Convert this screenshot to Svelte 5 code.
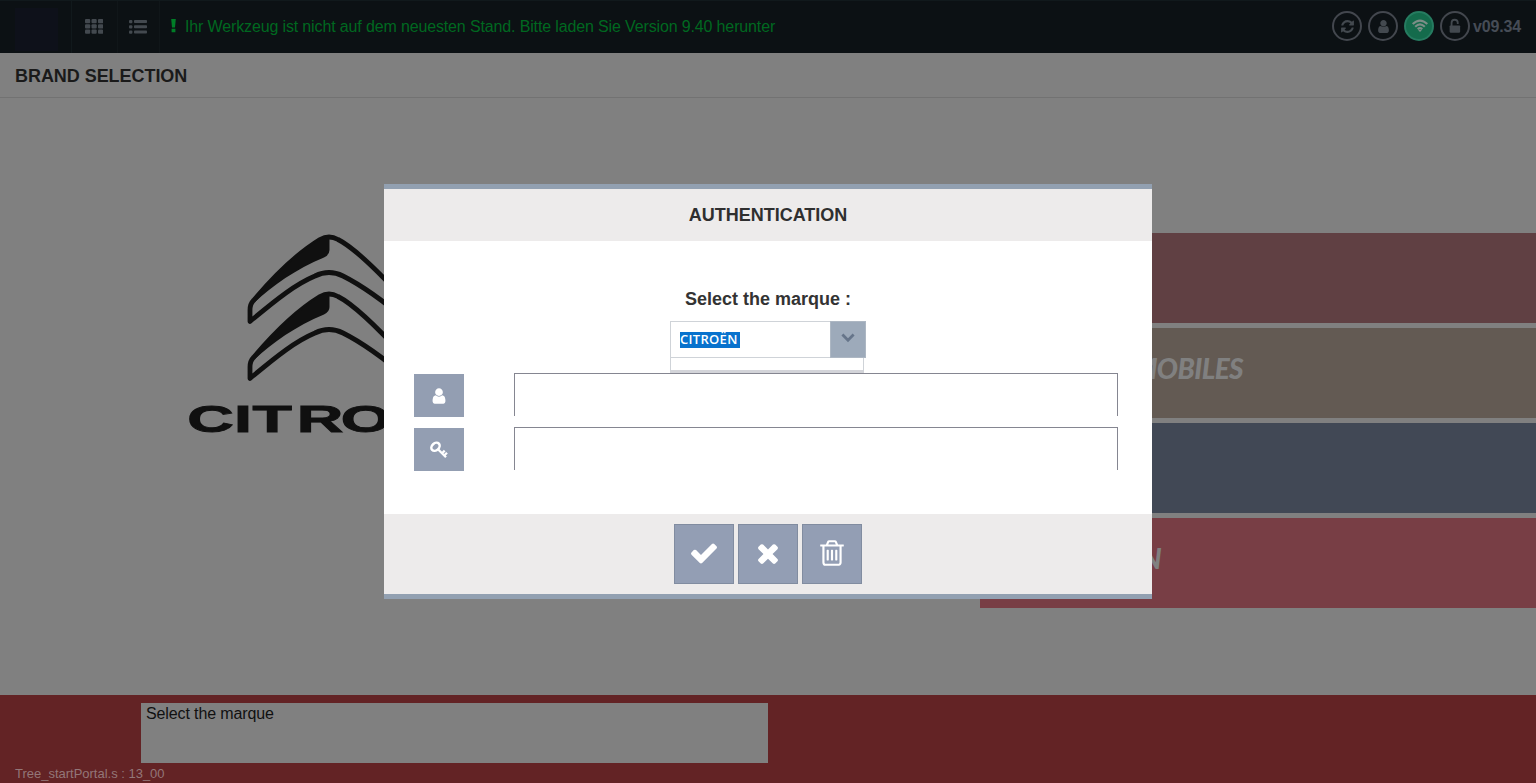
<script>
  const user = 'M1536 1399q0 109-62.5 187t-150.5 78h-854q-88 0-150.5-78t-62.5-187q0-85 8.5-160.5t31.5-152 58.5-131 94-89 134.5-34.5q131 128 313 128t313-128q76 0 134.5 34.5t94 89 58.5 131 31.5 152 8.5 160.5zm-256-887q0 159-112.5 271.5t-271.5 112.5-271.5-112.5-112.5-271.5 112.5-271.5 271.5-112.5 271.5 112.5 112.5 271.5z';
  const check = 'M1671 566q0 40-28 68l-724 724-136 136q-28 28-68 28t-68-28l-136-136-362-362q-28-28-28-68t28-68l136-136q28-28 68-28t68 28l294 295 656-657q28-28 68-28t68 28l136 136q28 28 28 68z';
  const times = 'M1490 1322q0 40-28 68l-136 136q-28 28-68 28t-68-28l-294-294-294 294q-28 28-68 28t-68-28l-136-136q-28-28-28-68t28-68l294-294-294-294q-28-28-28-68t28-68l136-136q28-28 68-28t68 28l294 294 294-294q28-28 68-28t68 28l136 136q28 28 28 68t-28 68l-294 294 294 294q28 28 28 68z';
  const trash = 'M704 736v576q0 14-9 23t-23 9h-64q-14 0-23-9t-9-23v-576q0-14 9-23t23-9h64q14 0 23 9t9 23zm256 0v576q0 14-9 23t-23 9h-64q-14 0-23-9t-9-23v-576q0-14 9-23t23-9h64q14 0 23 9t9 23zm256 0v576q0 14-9 23t-23 9h-64q-14 0-23-9t-9-23v-576q0-14 9-23t23-9h64q14 0 23 9t9 23zm128 724v-948h-896v948q0 22 7 40.5t14.5 27 10.5 8.5h832q3 0 10.5-8.5t14.5-27 7-40.5zm-672-1076h448l-48-117q-7-9-17-11h-317q-10 2-17 11zm928 32v64q0 14-9 23t-23 9h-96v948q0 83-47 143.5t-113 60.5h-832q-66 0-113-58.5t-47-141.5v-952h-96q-14 0-23-9t-9-23v-64q0-14 9-23t23-9h309l70-167q15-37 54-63t79-26h320q40 0 79 26t54 63l70 167h309q14 0 23 9t9 23z';
  const refresh = 'M1639 1056q0 5-1 7-64 268-268 434.5t-478 166.5q-146 0-282.5-55t-243.5-157l-129 129q-19 19-45 19t-45-19-19-45v-448q0-26 19-45t45-19h448q26 0 45 19t19 45-19 45l-137 137q71 66 161 102t187 36q134 0 250-65t186-179q11-17 53-117 8-23 30-23h192q13 0 22.5 9.5t9.5 22.5zm25-800v448q0 26-19 45t-45 19h-448q-26 0-45-19t-19-45 19-45l138-138q-148-137-349-137-134 0-250 65t-186 179q-11 17-53 117-8 23-30 23h-199q-13 0-22.5-9.5t-9.5-22.5v-7q65-268 270-434.5t480-166.5q146 0 284 55.5t245 156.5l130-129q19-19 45-19t45 19 19 45z';
  const actions = [
    { d: check, label: 'OK' },
    { d: times, label: 'Cancel' },
    { d: trash, label: 'Clear' }
  ];
</script>

{#snippet glyph(d, size)}
  <svg width={size} height={size} viewBox="0 0 1792 1792"><path {d} fill="currentColor" /></svg>
{/snippet}

<div class="page">
  <header>
    <div class="home"><span></span></div>
    <div class="tool">
      <svg width="18" height="15" viewBox="0 0 18 15" fill="currentColor">
        {#each [0, 5.3, 10.6] as y}
          {#each [0, 6.5, 13] as x}<rect {x} {y} width="5.2" height="4.2" rx="1" />{/each}
        {/each}
      </svg>
    </div>
    <div class="tool second">
      <svg width="18" height="14" viewBox="0 0 18 14" fill="currentColor">
        {#each [0, 5.3, 10.6] as y}
          <rect x="0" {y} width="3.4" height="3.2" rx="1" /><rect x="5" {y} width="13" height="3" rx=".8" />
        {/each}
      </svg>
    </div>
    <div class="notice">
      <svg width="5" height="14" viewBox="0 0 5 14" fill="currentColor"><path d="M.2 0H4.8L4 8.500H1ZM.6 9.800H4.400V13.200H.6Z" /></svg>
      <span>Ihr Werkzeug ist nicht auf dem neuesten Stand. Bitte laden Sie Version 9.40 herunter</span>
    </div>
    <div class="status">
      <i>{@render glyph(refresh, 15)}</i>
      <i>{@render glyph(user, 15)}</i>
      <i class="online">
        <svg width="18" height="14" viewBox="0 0 18 14" fill="none" stroke="currentColor" stroke-width="2.1">
          <path d="M1.700 5.100Q9-1.800 16.300 5.100M4.200 7.700Q9 3.200 13.800 7.700M6.700 10.100Q9 8 11.300 10.100" /><path d="M7.200 11.200Q9 10.200 10.800 11.200L9 13Z" fill="currentColor" stroke="none" />
        </svg>
      </i>
      <i>
        <svg width="14" height="16" viewBox="0 0 12 14"><path d="M3 7V4.200A2.700 2.700 0 0 1 8.400 4.200V5.300" fill="none" stroke="currentColor" stroke-width="1.6" /><rect x="1.300" y="6.500" width="9.200" height="6.300" rx=".7" fill="currentColor" /></svg>
      </i>
      <b>v09.34</b>
    </div>
  </header>

  <h1>BRAND SELECTION</h1>

  <main>
    <svg class="logo" width="290" height="210" viewBox="0 0 290 210">
      <g fill="none" stroke="#101010" stroke-width="4.8" stroke-linejoin="round">
        {#each [0, 57] as dy}
          <g transform="translate(0 {dy})">
            <path d="M62 88.500V77Q62 71 65.500 67.500C87 42 110 20 132 6.500Q141 1.500 150 6.500C165 14 190 38 217 67.500Q220 71 220 77V88.500C192 65 171 51 155 43Q141 36 127 43C108 51 90 65 62 88.500Z" />
            <path d="M65 69C87 42 110 20 132 6.500L141.500 3V17Q141.500 22 136 24.500C108 36 84 53 67 69Z" fill="#101010" stroke="none" />
          </g>
        {/each}
      </g>
      <text transform="scale(1.72 1)" y="199" x="-.5 26.800 37.500 63.300 88.800 117 143">CITROËN</text>
    </svg>
    <div class="brands">
      <div class="brand rose"></div>
      <div class="brand sand"><span>AUTOMOBILES</span></div>
      <div class="brand navy"></div>
      <div class="brand red"><span class="short">N</span></div>
    </div>
  </main>

  <footer>
    <div class="message">Select the marque</div>
    <div class="trace">Tree_startPortal.s : 13_00</div>
  </footer>

  <section class="dialog">
    <h2>AUTHENTICATION</h2>
    <div class="content">
      <div class="label">Select the marque :</div>
      <div class="combo">
        <div class="value"><span>CITROËN</span></div>
        <button aria-label="Open list">
          <svg width="14" height="10" viewBox="0 0 14 10" fill="none" stroke="#66758a" stroke-width="2.8"><path d="M1.400 1.600L7 7.200L12.600 1.600" /></svg>
        </button>
      </div>
      <div class="list"></div>
      <div class="field">
        <div class="badge">{@render glyph(user, 18)}</div>
        <div class="input"></div>
      </div>
      <div class="field">
        <div class="badge">
          <svg width="19" height="18" viewBox="0 0 19 18" fill="none" stroke="#fff" stroke-width="2.5"><ellipse cx="5.500" cy="5.800" rx="4.600" ry="3.500" transform="rotate(-43 5.500 5.800)" /><path d="M8 8.200L16 16.200M12 12.300L14.700 9.600M14.200 14.500L17 11.700" stroke-width="2.300" /></svg>
        </div>
        <div class="input"></div>
      </div>
    </div>
    <div class="actions">
      {#each actions as a}<button aria-label={a.label}>{@render glyph(a.d, 30)}</button>{/each}
    </div>
  </section>
</div>

<style>
  :global(body) { margin: 0; }
  * { box-sizing: border-box; }
  svg { display: block; }
  .page { position: relative; width: 1536px; height: 783px; overflow: hidden; display: flex; flex-direction: column; background: #808080; font-family: "Liberation Sans", Arial, sans-serif; }
  header { height: 53px; flex: none; display: flex; background: #0c1114; border-top: 1px solid #11191c; color: #43494f; }
  .home { width: 72px; padding: 7px 0 0 15px; border-right: 1px solid #11191c; }
  .home span { display: block; width: 43px; height: 43px; background: #0e111a; }
  .tool { width: 46px; border-right: 1px solid #101619; padding: 18px 0 0 13px; }
  .second { width: 42px; padding: 19px 0 0 11px; }
  .notice { display: flex; color: #006820; font-size: 16px; line-height: 20px; padding: 16px 0 0 11px; }
  .notice svg { margin-top: 2px; color: #007d27; }
  .notice span { margin-left: 9px; letter-spacing: -.14px; white-space: nowrap; }
  .status { margin-left: auto; display: flex; padding: 10px 15px 0 0; }
  .status i { width: 30px; height: 30px; border: 2px solid #43474e; border-radius: 50%; margin-right: 6px; display: flex; align-items: center; justify-content: center; }
  .status i:nth-child(4) { margin-right: 3px; }
  .status .online { background: #146b4c; border-color: #267b60; color: #7c8e87; padding-left: 2px; }
  .status b { font-size: 16px; line-height: 31px; color: #464c56; width: 48px; letter-spacing: -.15px; }
  h1 { flex: none; margin: 0; height: 45px; border-bottom: 1px solid #727272; padding: 1px 0 0 15px; font-size: 18px; line-height: 45px; color: #1a1a1a; letter-spacing: -.05px; }
  main { flex: 1; display: flex; justify-content: space-between; padding-top: 135px; }
  .logo { margin-left: 188px; overflow: visible; }
  .logo text { font-family: "Liberation Sans", Arial, sans-serif; font-size: 37.5px; font-weight: bold; fill: #101010; stroke: #101010; stroke-width: .9px; }
  .brands { width: 556px; display: grid; grid-template-rows: repeat(4, 90px); gap: 5px; }
  .brand { display: flex; justify-content: flex-end; align-items: center; padding-bottom: 11px; color: #808080; font-family: Lato, sans-serif; font-weight: 900; font-style: italic; font-size: 28px; }
  .brand span { padding-right: 293px; letter-spacing: -.6px; }
  .brand .short { padding-right: 375px; }
  .rose { background: #604043; }
  .sand { background: #635a53; }
  .navy { background: #414855; }
  .red { background: #783e45; }
  footer { height: 88px; flex: none; background: #632325; padding-top: 8px; }
  .message { width: 627px; height: 60px; margin-left: 141px; padding-left: 5px; background: #808080; color: #111; font-size: 16px; line-height: 21px; letter-spacing: -.12px; }
  .trace { padding: 1px 0 0 15px; font-size: 13px; line-height: 20px; color: #937678; letter-spacing: -.01px; }
  .dialog { position: absolute; left: 384px; top: 184px; width: 768px; height: 415px; background: #fff; border-top: 5px solid #92a0b1; border-bottom: 5px solid #92a0b1; display: flex; flex-direction: column; }
  h2 { flex: none; margin: 0; height: 52px; background: #edebeb; text-align: center; color: #2f2f2f; font-size: 18px; line-height: 52px; }
  .content { flex: 1; padding: 47px 34px 0 30px; }
  .label { padding-left: 4px; text-align: center; color: #333; font-size: 18px; line-height: 22px; font-weight: bold; }
  .combo { width: 196px; height: 37px; display: flex; margin: 11px 0 0 256px; }
  .value { width: 160px; border: 1px solid #cfd3d8; border-right: 0; padding: 10px 0 0 9px; font-family: "Open Sans", sans-serif; font-size: 13px; line-height: 15px; color: #fff; }
  .value span { display: inline-block; width: 60px; height: 16px; background: #0872cd; white-space: nowrap; letter-spacing: .3px; font-weight: 600; }
  button { padding: 0; border: 0; border-radius: 0; display: flex; justify-content: center; align-items: center; }
  .combo button { width: 36px; background: #9daaba; padding-bottom: 4px; border: 1px solid #adb7c3; }
  .list { width: 194px; height: 15px; margin-left: 256px; border: 1px solid #cfd3d8; border-top: 0; border-bottom: 3px solid #d3d4d9; }
  .field { display: flex; height: 43px; margin-bottom: 11px; }
  .badge { width: 50px; height: 43px; margin: 1px 50px 0 0; background: #939eb2; color: #fff; display: flex; align-items: center; justify-content: center; }
  .input { flex: 1; border: 1px solid #858691; border-bottom: 0; }
  .actions { flex: none; height: 80px; padding-top: 10px; background: #edebeb; display: flex; justify-content: center; gap: 4px; }
  .actions button { width: 60px; height: 60px; background: #939eb4; border: 1px solid #818ca0; padding-bottom: 2px; color: #fff; }
</style>
